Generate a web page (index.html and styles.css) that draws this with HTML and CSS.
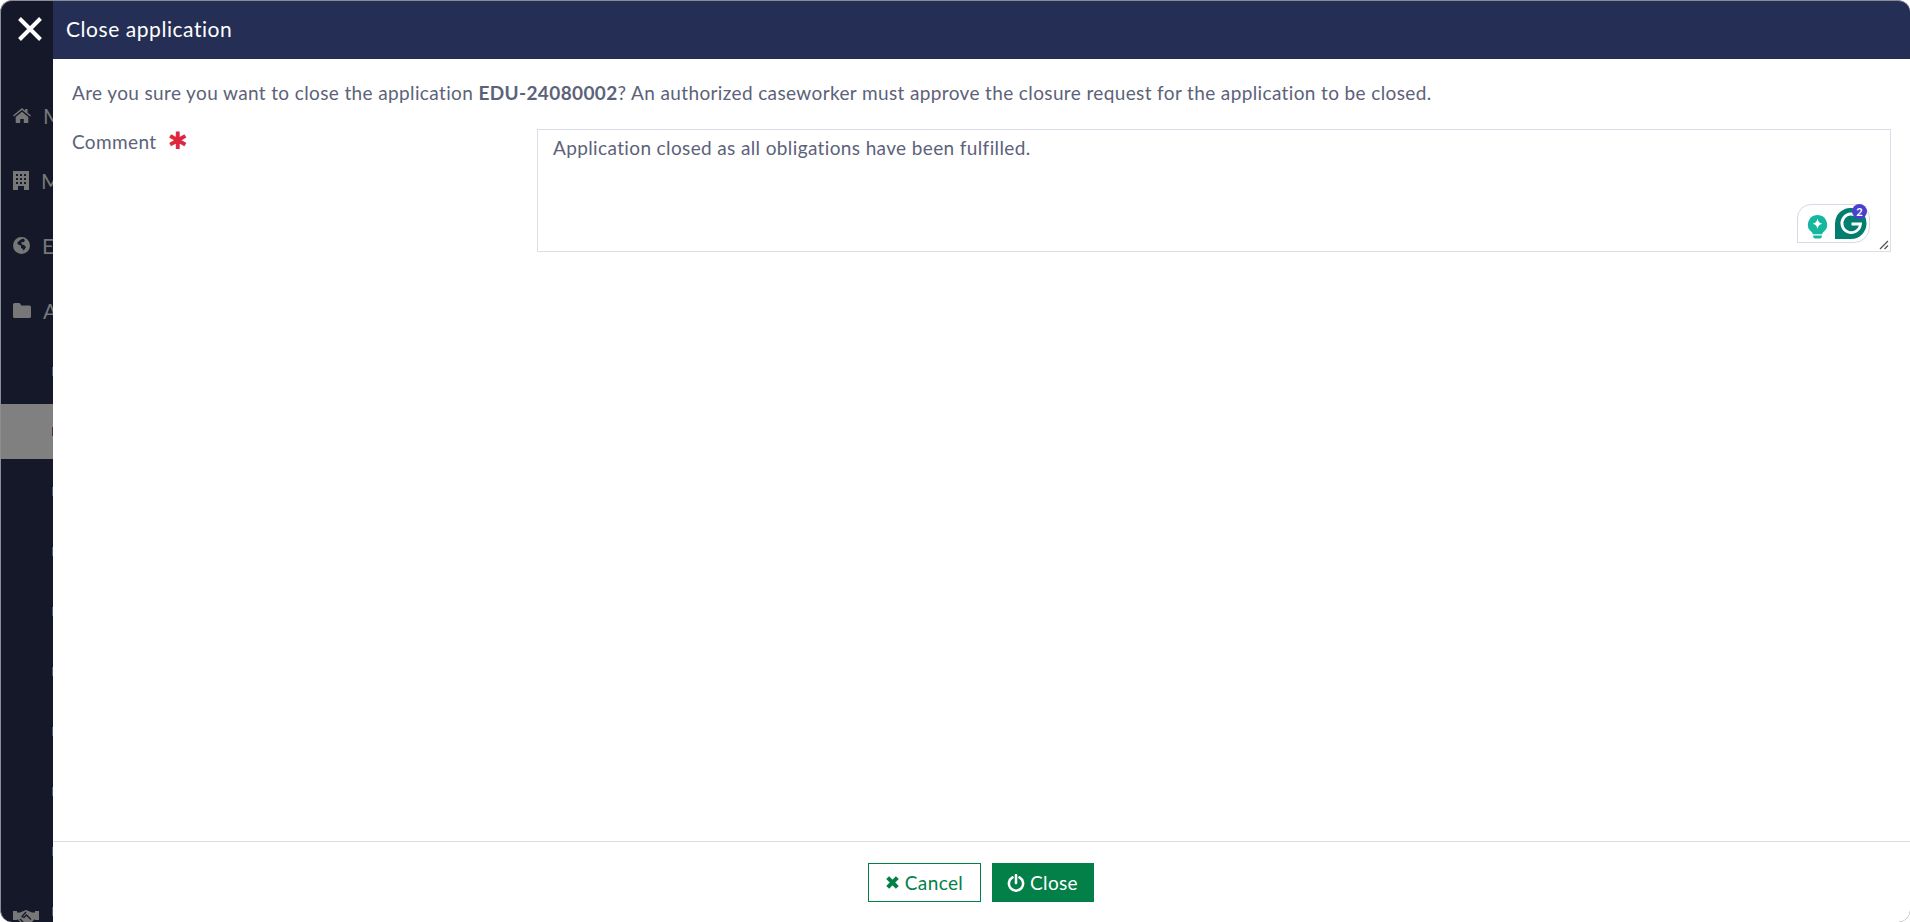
FILE: index.html
```html
<!DOCTYPE html>
<html lang="en">
<head>
  <meta charset="UTF-8">
  <meta name="viewport" content="width=device-width, initial-scale=1.0">
  <title>Close application</title>
  <link rel="stylesheet" href="styles.css">
</head>
<body>
  <div class="window">
    <aside class="sidebar">
      <button class="close-x" aria-label="Close">
        <svg width="24" height="24" viewBox="0 0 24 24"><path d="M1.500 1.500L22.500 22.500M22.500 1.500L1.500 22.500" stroke="#fff" stroke-width="4" fill="none"/></svg>
      </button>
      <nav class="nav">
        <div class="nav-item">
          <svg class="nav-icon" width="18" height="15" viewBox="0 0 18 15"><path d="M9 0L0 7.600l.9 1L9 2l8.100 6.600.9-1L14.500 4.700V1h-2.400v1.700zM2.700 9L9 3.800 15.300 9v6h-4.500v-4H7.200v4H2.700z" fill="#777"/></svg>
          <span class="nav-letter">M</span>
        </div>
        <div class="nav-item">
          <svg class="nav-icon" width="16" height="19" viewBox="0 0 16 19"><path fill-rule="evenodd" d="M0 0h16v19H0zM3 3v2h2V3zm4 0v2h2V3zm4 0v2h2V3zM3 7v2h2V7zm4 0v2h2V7zm4 0v2h2V7zM3 11v2h2v-2zm4 0v2h2v-2zm4 0v2h2v-2zM5 15v4h6v-4z" fill="#777"/></svg>
          <span class="nav-letter">M</span>
        </div>
        <div class="nav-item">
          <svg class="nav-icon" width="17" height="17" viewBox="0 0 17 17"><path fill-rule="evenodd" d="M8.500 0a8.500 8.500 0 1 1 0 17 8.500 8.500 0 0 1 0-17zM7 3L4 6l2 2 2 .5L8 11l2 1 .5 2L13 10l-2-2-2-.5-1-2 3-.5 1-2-2-1.500z" fill="#777"/></svg>
          <span class="nav-letter">E</span>
        </div>
        <div class="nav-item">
          <svg class="nav-icon" width="18" height="15" viewBox="0 0 18 15"><path d="M1.500 0h5L8.500 2.500h8A1.500 1.500 0 0 1 18 4v9.500a1.500 1.500 0 0 1-1.500 1.500h-15A1.500 1.500 0 0 1 0 13.500v-12A1.500 1.500 0 0 1 1.500 0z" fill="#777"/></svg>
          <span class="nav-letter">A</span>
        </div>
      </nav>
      <ul class="sub-list">
        <li class="sub-item"><span class="sub-mark"></span></li>
        <li class="sub-item active"><span class="sub-mark"></span></li>
        <li class="sub-item"><span class="sub-mark"></span></li>
        <li class="sub-item"><span class="sub-mark"></span></li>
        <li class="sub-item"><span class="sub-mark"></span></li>
        <li class="sub-item"><span class="sub-mark"></span></li>
        <li class="sub-item"><span class="sub-mark"></span></li>
        <li class="sub-item"><span class="sub-mark"></span></li>
        <li class="sub-item"><span class="sub-mark"></span></li>
        <li class="sub-item"><span class="sub-mark"></span></li>
      </ul>
      <svg class="handshake" width="26" height="15" viewBox="0 0 26 15"><path d="M0 1h4v9H0zM22 1h4v9h-4zM4 2.500h3L13 0l6 2.500h3V9l-6.500 6h-5L4 9z" fill="#777"/><path d="M13 2L9 6.500l2 1L13.500 5 18 9.500M7 9l4.500 4.500h3" fill="none" stroke="#141829" stroke-width="1.300"/></svg>
    </aside>

    <main class="dialog">
      <header class="dialog-header">
        <h1 class="dialog-title">Close application</h1>
      </header>
      <section class="dialog-body">
        <p class="message">Are you sure you want to close the application <strong>EDU-24080002</strong>? An authorized caseworker must approve the closure request for the application to be closed.</p>
        <div class="form-row">
          <label class="form-label" for="comment">Comment <span class="required">✱</span></label>
          <div class="field">
            <textarea class="comment" id="comment">Application closed as all obligations have been fulfilled.</textarea>
            <div class="grammarly">
              <svg width="21" height="25" viewBox="0 0 22 26"><path d="M11 1a10 10 0 0 1 6.500 17.600c-1 .9-1.500 1.600-1.500 2.400H6c0-.8-.5-1.500-1.500-2.400A10 10 0 0 1 11 1z" fill="#15b79e"/><path d="M6.500 22.500h9v1a2 2 0 0 1-2 2h-5a2 2 0 0 1-2-2z" fill="#15b79e"/><path d="M11 4.500c.7 3.300 1.700 4.800 5 5.500-3.300.7-4.300 2.200-5 5.500-.7-3.300-1.700-4.800-5-5.500 3.300-.7 4.300-2.200 5-5.500z" fill="#fff"/></svg>
              <svg width="32" height="31" viewBox="0 0 32 31"><path d="M16 0a15.500 15.500 0 0 1 0 31H0V15.500A15.500 15.500 0 0 1 16 0z" fill="#027e6f"/><path d="M23.500 9.500A9.300 9.300 0 1 0 25.500 16h-9" fill="none" stroke="#fff" stroke-width="2.800"/></svg>
              <span class="badge">2</span>
            </div>
            <svg class="resize-grip" width="10" height="10" viewBox="0 0 10 10"><path d="M9 1L1 9M9 5.500L5.500 9" stroke="#555" stroke-width="1.300"/></svg>
          </div>
        </div>
      </section>
      <footer class="dialog-footer">
        <button class="btn btn-outline">
          <svg width="15" height="15" viewBox="0 0 14 14"><path d="M2.500 2.500l9 9M11.500 2.500l-9 9" stroke="#028047" stroke-width="3.800" fill="none"/></svg>
          Cancel
        </button>
        <button class="btn btn-solid">
          <svg width="18" height="18" viewBox="0 0 17 17"><path d="M5.200 3.200a6.700 6.700 0 1 0 6.600 0M8.500 1v7.500" stroke="#fff" stroke-width="2.400" fill="none" stroke-linecap="round"/></svg>
          Close
        </button>
      </footer>
    </main>
  </div>
</body>
</html>
```

FILE: styles.css
```css
* {
  box-sizing: border-box;
}
html, body {
  height: 100%;
}
body {
  margin: 0;
  background: #fff;
  font-family: Lato, 'Noto Sans', sans-serif;
  color: #5c6279;
  overflow: hidden;
}
.window {
  display: flex;
  height: 922px;
  border-radius: 12px;
  overflow: hidden;
  background: #141829;
  border-top: 1px solid #8a8c96;
  border-left: 1px solid #8a8c96;
}
.sidebar {
  width: 52px;
  flex-shrink: 0;
  display: flex;
  flex-direction: column;
  overflow: hidden;
}
.close-x {
  display: block;
  background: none;
  border: 0;
  padding: 0;
  margin: 16px 0 0 17px;
  width: 24px;
  height: 24px;
}
.nav {
  margin-top: 42px;
  display: flex;
  flex-direction: column;
}
.nav-item {
  height: 65px;
  padding-left: 12px;
  display: flex;
  align-items: center;
  white-space: nowrap;
  color: #777;
  font-size: 21px;
}
.nav-icon {
  flex-shrink: 0;
}
.nav-letter {
  margin-left: 12px;
}
.sub-list {
  list-style: none;
  margin: 1px 0 0;
  padding: 0;
}
.sub-item {
  height: 55px;
  margin-bottom: 5px;
  display: flex;
  align-items: center;
  justify-content: flex-end;
}
.sub-item.active {
  background: #808080;
}
.sub-mark {
  width: 1px;
  height: 9px;
  background: #3d5b80;
}
.active .sub-mark {
  background: #5c2a20;
}
.handshake {
  margin: -34px 0 0 12px;
  flex-shrink: 0;
}
.dialog {
  flex: 1;
  display: flex;
  flex-direction: column;
  background: #fff;
}
.dialog-header {
  height: 58px;
  background: #252e54;
  padding: 0 0 4px 13px;
  display: flex;
  align-items: center;
}
.dialog-title {
  margin: 0;
  font-size: 21px;
  font-weight: 400;
  letter-spacing: 0.55px;
  color: #fff;
}
.dialog-body {
  flex: 1;
  padding: 22px 19px 0;
}
.message {
  margin: 0;
  font-size: 19px;
  letter-spacing: 0.37px;
  line-height: 24px;
}
.message strong {
  font-weight: 700;
}
.form-row {
  display: flex;
  margin-top: 24px;
}
.form-label {
  width: 465px;
  flex-shrink: 0;
  font-size: 19px;
  letter-spacing: 0.37px;
  line-height: 24px;
  padding-top: 1px;
}
.required {
  color: #e0263f;
  font-size: 24px;
  margin-left: 6px;
  font-family: 'DejaVu Sans', sans-serif;
  line-height: 18px;
}
.field {
  position: relative;
  width: 1354px;
  height: 123px;
}
.comment {
  display: block;
  width: 100%;
  height: 100%;
  border: 1px solid #dddde9;
  padding: 6px 15px;
  resize: none;
  font: inherit;
  font-size: 19px;
  letter-spacing: 0.37px;
  line-height: 24px;
  color: #5c6279;
  outline: none;
}
.grammarly {
  position: absolute;
  right: 21px;
  bottom: 9px;
  width: 73px;
  height: 39px;
  display: flex;
  align-items: flex-end;
  gap: 7px;
  padding: 0 0 3px 9px;
  border: 1px solid #d5d8e6;
  border-radius: 14px 14px 16px 0;
}
.badge {
  position: absolute;
  top: -1px;
  right: 2px;
  width: 15px;
  height: 15px;
  border-radius: 50%;
  background: #4a3fd0;
  color: #fff;
  font-size: 11px;
  font-weight: 700;
  line-height: 15px;
  text-align: center;
}
.resize-grip {
  position: absolute;
  right: 2px;
  bottom: 2px;
}
.dialog-footer {
  height: 81px;
  border-top: 1px solid #dddde9;
  display: flex;
  justify-content: center;
  align-items: flex-start;
  gap: 11px;
  padding: 21px 2px 0 0;
}
.btn {
  height: 39px;
  display: flex;
  align-items: center;
  justify-content: center;
  gap: 5px;
  font: inherit;
  font-size: 19px;
  letter-spacing: 0.37px;
  border: 1px solid #028047;
  padding: 0;
}
.btn-outline {
  width: 113px;
  background: #fff;
  color: #028047;
}
.btn-solid {
  width: 102px;
  background: #028047;
  color: #fff;
}
```
